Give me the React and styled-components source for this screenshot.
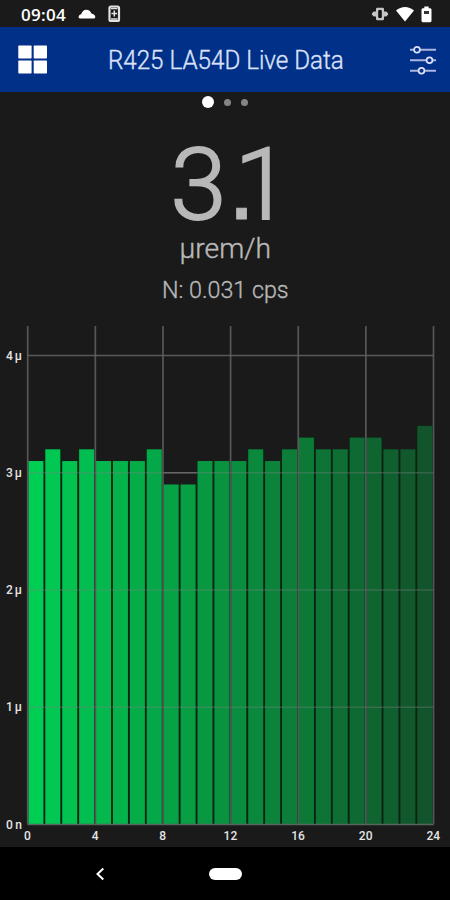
import React from "react";
import styled, { createGlobalStyle } from "styled-components";

const GlobalStyle = createGlobalStyle`
  * { box-sizing: border-box; }
  body { margin: 0; background: #1a1a1a; }
`;

const Screen = styled.main`
  width: 450px;
  height: 900px;
  display: flex;
  flex-direction: column;
  overflow: hidden;
  background: #1a1a1a;
  color: #b8b8b8;
  font-family: Roboto, "Liberation Sans", sans-serif;
`;

const StatusBar = styled.div`
  height: 27px;
  flex: none;
  display: flex;
  align-items: center;
  justify-content: space-between;
  padding: 1px 18px 0 21px;
  color: #fff;
`;

const StatusGroup = styled.div`
  display: flex;
  align-items: center;
  gap: ${(p) => p.$gap}px;
`;

const Clock = styled.span`
  width: 45px;
  padding-top: 1px;
  font: 600 17px/20px "Open Sans", sans-serif;
  letter-spacing: 0.3px;
  white-space: nowrap;
`;

const Header = styled.header`
  height: 65px;
  flex: none;
  display: grid;
  grid-template-columns: 68px 1fr 68px;
  align-items: center;
  background: #003087;
`;

const IconButton = styled.button`
  display: flex;
  justify-content: ${(p) => (p.$end ? "flex-end" : "flex-start")};
  padding: ${(p) => (p.$end ? "0 13px 0 0" : "0 0 0 18px")};
  border: 0;
  background: none;
`;

const Fitted = styled.span`
  display: inline-block;
  white-space: nowrap;
  transform: scaleX(${(p) => p.$x});
`;

const Title = styled.h1`
  margin: 0;
  padding: 2px 0 0 2px;
  display: flex;
  justify-content: center;
  color: #dde2fb;
  font-size: 25px;
  line-height: 30px;
  font-weight: 300;
  -webkit-text-stroke: 0.35px;
`;

const Pager = styled.nav`
  height: 21px;
  flex: none;
  display: flex;
  align-items: center;
  justify-content: center;
  gap: 10px;
  padding: 0 1px 1px 0;
`;

const Dot = styled.span`
  width: ${(p) => (p.$active ? 12 : 7)}px;
  height: ${(p) => (p.$active ? 12 : 7)}px;
  border-radius: 50%;
  background: ${(p) => (p.$active ? "#fff" : "#858585")};
`;

const Reading = styled.section`
  height: 213px;
  flex: none;
  display: flex;
  flex-direction: column;
  align-items: center;
  padding-top: 16px;
  white-space: nowrap;
`;

const Value = styled.div`
  height: 106px;
  padding-left: 11px;
  font-size: 101px;
  line-height: 112px;
  font-weight: 300;
  -webkit-text-stroke: 2px;
`;

const Point = styled.span`
  margin-left: 1px;
  font-family: "Liberation Sans", sans-serif;
  line-height: 0;
  letter-spacing: -21px;
  -webkit-text-stroke: 1px;
`;

const Unit = styled.div`
  font-size: 28px;
  line-height: 28px;
  font-weight: 300;
  -webkit-text-stroke: 0.4px;
`;

const Rate = styled.div`
  margin-top: 13px;
  padding-left: 1px;
  font-size: 24px;
  line-height: 28px;
  font-weight: 300;
  -webkit-text-stroke: 0.35px;
`;

const ChartPanel = styled.section`
  height: 521px;
  flex: none;
  svg { display: block; }
`;

const AxisLabel = styled.text`
  fill: #e4e4e4;
  font: 500 12px Roboto, sans-serif;
`;

const NavBar = styled.footer`
  height: 53px;
  flex: none;
  display: grid;
  grid-template-columns: 1fr 33px 1fr;
  align-items: center;
  background: #000;
`;

const BackButton = styled.button`
  display: flex;
  justify-content: flex-start;
  padding: 0 0 0 95px;
  border: 0;
  background: none;
`;

const HomePill = styled.span`
  height: 12px;
  border-radius: 6px;
  background: #fff;
`;

const VALUES = [
  3.1, 3.2, 3.1, 3.2, 3.1, 3.1, 3.1, 3.2, 2.9, 2.9, 3.1, 3.1,
  3.1, 3.2, 3.1, 3.2, 3.3, 3.2, 3.2, 3.3, 3.3, 3.2, 3.2, 3.4,
];
const LEFT = 27.7;
const RIGHT = 433.5;
const BASE = 498.5;
const UNIT = 117.25;
const PITCH = (RIGHT - LEFT) / 24;

const barColor = (i) => {
  const t = i / 23;
  const mix = (a, b) => Math.round(a + (b - a) * t);
  return `rgb(${mix(0, 18)}, ${mix(205, 84)}, ${mix(84, 43)})`;
};

function Chart() {
  const ticks = [0, 4, 8, 12, 16, 20, 24];
  return (
    <svg width="450" height="521" viewBox="0 0 450 521">
      {[1, 2, 3, 4].map((n) => (
        <path key={n} d={`M${LEFT} ${BASE - n * UNIT}H${RIGHT}`} stroke="#5a5a5a" strokeWidth="1.7" />
      ))}
      {VALUES.map((v, i) => (
        <g key={i}>
          <rect x={LEFT + i * PITCH} y={BASE - v * UNIT} width={PITCH} height={v * UNIT} fill="#092513" />
          <rect x={LEFT + i * PITCH + 0.7} y={BASE - v * UNIT} width={PITCH - 1.9} height={v * UNIT} fill={barColor(i)} />
        </g>
      ))}
      {[1, 2, 3].map((n) => (
        <path key={n} d={`M${LEFT} ${BASE - n * UNIT}H${RIGHT}`} stroke="#808080" strokeOpacity=".35" strokeWidth="1.6" />
      ))}
      {ticks.map((n) => (
        <path key={n} d={`M${LEFT + n * PITCH} 0V${BASE}`} stroke="#626262" strokeOpacity=".85" strokeWidth="1.7" />
      ))}
      <path d={`M${LEFT} ${BASE}H${RIGHT}`} stroke="#56665b" strokeWidth="1.4" />
      {["0 n", "1 μ", "2 μ", "3 μ", "4 μ"].map((label, n) => (
        <AxisLabel key={label} x="22" y={BASE - n * UNIT + 4.2} textAnchor="end" textLength="16" lengthAdjust="spacing">
          {label}
        </AxisLabel>
      ))}
      {ticks.map((n) => (
        <AxisLabel key={n} x={LEFT + n * PITCH - 0.2} y="514" textAnchor="middle">{n}</AxisLabel>
      ))}
    </svg>
  );
}

const CloudIcon = () => (
  <svg width="18" height="12" viewBox="0 0 18 12" fill="#fff">
    <path d="M2 10.500C1.100 10.500.6 9.900.6 9.100c0-1.500 1.100-2.600 2.600-2.900C4.200 3.400 5.800 1.800 8.200 1.800c2.600 0 4.500 1.600 5.200 3.600 2.200.3 3.900 1.800 3.900 3.700 0 .9-.5 1.400-1.400 1.400z" />
  </svg>
);

const SaverIcon = () => (
  <svg width="13" height="18" viewBox="0 0 13 18" fill="none" stroke="#e2e2e2">
    <rect x="1.500" y="1.500" width="9.500" height="14.500" rx="1.500" strokeWidth="2.200" />
    <path d="M6.300 5.500v6M3.500 8.500h5.600" strokeWidth="1.500" />
    <path d="M3 3.500h6.500M3 14h6.500" strokeWidth="1.500" />
  </svg>
);

const VibrateIcon = () => (
  <svg width="18" height="16" viewBox="0 0 18 16">
    <path d="M6.200 3h5.600v10H6.200zM3.800 5.500v5M14.200 5.500v5" fill="#c4c4c4" stroke="#c4c4c4" strokeWidth="2.400" strokeLinejoin="round" />
    <path d="M1 8l1.700-2v4zM17 8l-1.700-2v4z" fill="#ccc" stroke="#ccc" />
    <rect x="7.200" y="4" width="3.600" height="8" rx="1" fill="#111" />
  </svg>
);

const WifiIcon = () => (
  <svg width="18" height="16" viewBox="0 0 18 16" fill="#fff">
    <path d="M0 4.500C5.200-.2 12.800-.2 18 4.500L9 15.500z" />
  </svg>
);

const BatteryIcon = () => (
  <svg width="11" height="17" viewBox="0 0 11 17">
    <path d="M3.300.5h4.400v1.800H9.500l1 1v12l-1 1h-8l-1-1v-12l1-1h1.800z" fill="#fff" />
    <path d="M3 5h5v3H3z" fill="#333" />
  </svg>
);

const GridIcon = () => (
  <svg width="29" height="29" viewBox="0 0 29 29" fill="#fff">
    {[0.3, 15.7].map((x) => [0.5, 15.5].map((y) => (
      <rect key={`${x}-${y}`} x={x} y={y} width="13.300" height="13" rx=".8" />
    )))}
  </svg>
);

const SlidersIcon = () => (
  <svg width="27" height="30" viewBox="0 0 27 30" fill="#003087" stroke="#dde1fa">
    <path d="M0 4.700h26M0 15.200h26M0 25.700h26" stroke="#adb6de" strokeWidth="1.900" />
    <circle cx="7" cy="4.700" r="2.900" strokeWidth="1.700" />
    <circle cx="19.500" cy="15.200" r="2.900" strokeWidth="1.700" />
    <circle cx="11.500" cy="25.700" r="2.900" strokeWidth="1.700" />
  </svg>
);

export default function App() {
  return (
    <>
      <GlobalStyle />
      <Screen>
        <StatusBar>
          <StatusGroup $gap={12}>
            <Clock>09:04</Clock>
            <CloudIcon />
            <SaverIcon />
          </StatusGroup>
          <StatusGroup $gap={7}>
            <VibrateIcon />
            <WifiIcon />
            <BatteryIcon />
          </StatusGroup>
        </StatusBar>
        <Header>
          <IconButton aria-label="Dashboard"><GridIcon /></IconButton>
          <Title><Fitted $x={0.968}>R425 LA54D Live Data</Fitted></Title>
          <IconButton $end aria-label="Settings"><SlidersIcon /></IconButton>
        </Header>
        <Pager>
          <Dot $active />
          <Dot />
          <Dot />
        </Pager>
        <Reading>
          <Value>3<Point>.</Point>1</Value>
          <Unit><Fitted $x={1.01}>μrem/h</Fitted></Unit>
          <Rate><Fitted $x={0.97}>N: 0.031 cps</Fitted></Rate>
        </Reading>
        <ChartPanel><Chart /></ChartPanel>
        <NavBar>
          <BackButton aria-label="Back">
            <svg width="10" height="14" viewBox="0 0 10 14" fill="none" stroke="#fff" strokeWidth="2">
              <path d="M8.300 1.500L2.500 7l5.800 5.500" />
            </svg>
          </BackButton>
          <HomePill />
        </NavBar>
      </Screen>
    </>
  );
}
